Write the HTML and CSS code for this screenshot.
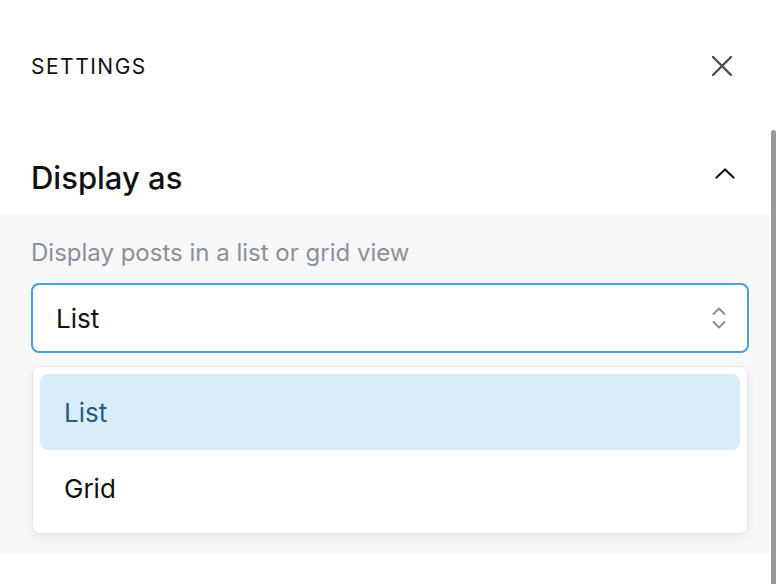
FILE: index.html
```html
<!DOCTYPE html>
<html>
<head>
<meta charset="utf-8">
<link rel="stylesheet" href="styles.css">
</head>
<body>
<div class="panel">
  <header class="header">
    <span class="title">SETTINGS</span>
    <button class="icon-btn close" aria-label="Close">
      <svg width="20" height="20" viewBox="0 0 20 20"><path d="M1 1L19 19M19 1L1 19" stroke="#464c54" stroke-width="2.3" stroke-linecap="round" fill="none"/></svg>
    </button>
  </header>
  <div class="section-head">
    <h2 class="section-title">Display as</h2>
    <svg class="chev" width="20" height="11" viewBox="0 0 20 11"><path d="M1.5 9.5L10 1.5L18.5 9.5" stroke="#111" stroke-width="2.2" fill="none" stroke-linecap="round" stroke-linejoin="round"/></svg>
  </div>
  <div class="section-body">
    <p class="desc">Display posts in a list or grid view</p>
    <div class="select">
      <span class="select-value">List</span>
      <svg width="14" height="22" viewBox="0 0 14 22"><path d="M1.5 7L7 1.5L12.5 7M1.5 15L7 20.5L12.5 15" stroke="#8a8f98" stroke-width="2" fill="none" stroke-linecap="round" stroke-linejoin="round"/></svg>
    </div>
    <ul class="menu">
      <li class="option selected">List</li>
      <li class="option">Grid</li>
    </ul>
  </div>
</div>
<div class="scrollbar"></div>
</body>
</html>
```
FILE: styles.css
```css
* { box-sizing: border-box; }
html, body { margin: 0; padding: 0; background: #fff; }
body {
  font-family: Inter, "Noto Sans", sans-serif;
  color: #111;
  width: 776px;
  height: 584px;
  overflow: hidden;
}
.panel { width: 771px; }
.header {
  height: 132px;
  display: flex;
  align-items: center;
  justify-content: space-between;
  padding: 0 39px 0 31px;
}
.title {
  font-size: 21px;
  letter-spacing: 1.5px;
  font-weight: 400;
  color: #111;
}
.icon-btn {
  border: 0; background: none; padding: 0; margin: 0;
  display: flex;
}
.section-head {
  height: 82px;
  display: flex;
  align-items: center;
  justify-content: space-between;
  padding: 0 36px 0 31px;
}
.section-title {
  margin: 0;
  font-size: 31px;
  font-weight: 500;
  line-height: 40px;
  padding-top: 10px;
}
.section-body {
  background: #f7f8fa;
  padding: 24px 22px 20px 31px;
}
.desc {
  margin: 0 0 15px;
  font-size: 24px;
  line-height: 30px;
  color: #8a9099;
}
.select {
  height: 70px;
  border: 2px solid #4a9ed9;
  border-radius: 8px;
  background: #fff;
  display: flex;
  align-items: center;
  justify-content: space-between;
  padding: 0 21px 0 23px;
}
.select-value { font-size: 26px; color: #111; }
.menu {
  list-style: none;
  margin: 13px 1px 0;
  padding: 7px;
  background: #fff;
  border: 1px solid #e6e7eb;
  border-radius: 8px;
  box-shadow: 0 4px 10px rgba(0,0,0,0.06);
}
.option {
  height: 76px;
  display: flex;
  align-items: center;
  padding-left: 24px;
  font-size: 26px;
  border-radius: 8px;
  color: #111;
}
.option.selected {
  background: #d7eefa;
  color: #2b5b80;
}
.scrollbar {
  position: absolute;
  left: 771px;
  top: 130px;
  width: 5px;
  height: 454px;
  background: #999;
  border-radius: 3px 3px 0 0;
}
```
